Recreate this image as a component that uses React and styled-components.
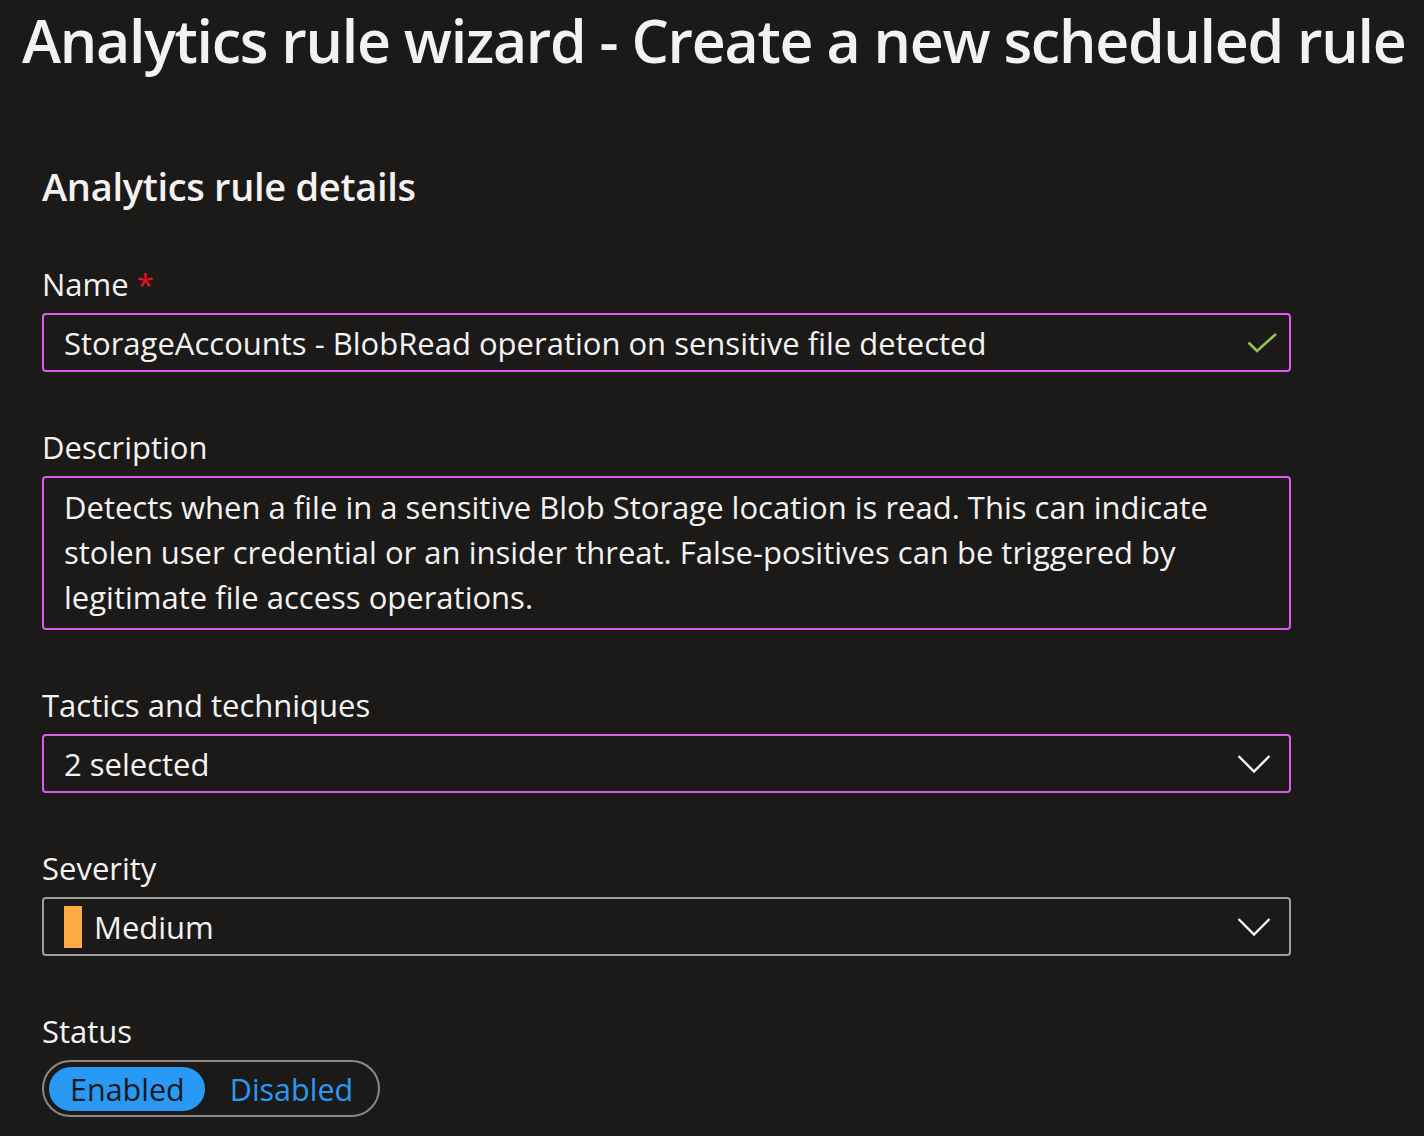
import React from "react";
import styled, { createGlobalStyle } from "styled-components";

const Global = createGlobalStyle`
  html, body { margin: 0; padding: 0; background: #1b1a19; }
  body { font-family: "Open Sans", "Noto Sans", sans-serif; color: #f3f2f1; }
  * { box-sizing: border-box; }
`;

const Page = styled.div`
  width: 1424px;
  height: 1136px;
  background: #1b1a19;
  overflow: hidden;
`;

const Title = styled.h1`
  margin: 0;
  padding: 0 0 0 22px;
  font-size: 59px;
  font-weight: 600;
  line-height: 80px;
  letter-spacing: -1.25px;
  white-space: nowrap;
`;

const Form = styled.div`
  width: 1291px;
  padding: 78px 0 0 42px;
  display: flex;
  flex-direction: column;
`;

const Heading = styled.h2`
  margin: 0 0 50px 0;
  font-size: 38px;
  font-weight: 600;
  line-height: 56px;
  letter-spacing: -0.3px;
`;

const Field = styled.div`
  display: flex;
  flex-direction: column;
  margin-bottom: 55px;
`;

const Label = styled.div`
  font-size: 31px;
  line-height: 40px;
  margin-bottom: 9px;
`;

const Required = styled.span`
  color: #e81123;
  margin-left: 8px;
`;

const Box = styled.div`
  display: flex;
  align-items: center;
  min-height: 59px;
  border: 2px solid ${(p) => (p.$muted ? "#a19f9d" : "#d75cf0")};
  border-radius: 4px;
  padding: ${(p) => (p.$multi ? "7px 20px 8px 20px" : "0 10px 0 20px")};
  font-size: 31px;
  line-height: ${(p) => (p.$multi ? "45px" : "40px")};
  gap: 12px;
`;

const Value = styled.div`
  flex: 1;
  max-width: ${(p) => (p.$wrap ? "1180px" : "none")};
`;

const SeverityBar = styled.span`
  width: 18px;
  height: 42px;
  background: #ffaa44;
  flex: none;
`;

const Toggle = styled.div`
  display: inline-flex;
  align-items: center;
  align-self: flex-start;
  gap: 4px;
  height: 57px;
  padding: 0 5px;
  border: 2px solid #8a8886;
  border-radius: 29px;
`;

const ToggleOption = styled.div`
  height: 44px;
  display: flex;
  align-items: center;
  padding: 0 20px 0 21px;
  border-radius: 22px;
  font-size: 30.5px;
  background: ${(p) => (p.$active ? "#2899f5" : "transparent")};
  color: ${(p) => (p.$active ? "#1b1a19" : "#2899f5")};
`;

const IconWrap = styled.span`
  display: flex;
  flex: none;
  margin-right: ${(p) => p.$mr || 0}px;
`;

const Check = () => (
  <IconWrap>
    <svg width="32" height="22" viewBox="0 0 32 22" fill="none">
      <path d="M1.5 10.5 L10 19 L29 2" stroke="#92c353" strokeWidth="2.6" />
    </svg>
  </IconWrap>
);

const Chevron = () => (
  <IconWrap $mr={8}>
    <svg width="34" height="20" viewBox="0 0 34 20" fill="none">
      <path d="M1.5 2 L17 17.5 L32.5 2" stroke="#f3f2f1" strokeWidth="2.4" />
    </svg>
  </IconWrap>
);

export default function App() {
  return (
    <Page>
      <Global />
      <Title>Analytics rule wizard - Create a new scheduled rule</Title>
      <Form>
        <Heading>Analytics rule details</Heading>
        <Field>
          <Label>
            Name<Required>*</Required>
          </Label>
          <Box>
            <Value>StorageAccounts - BlobRead operation on sensitive file detected</Value>
            <Check />
          </Box>
        </Field>
        <Field>
          <Label>Description</Label>
          <Box $multi>
            <Value $wrap>
              Detects when a file in a sensitive Blob Storage location is read. This can indicate
              stolen user credential or an insider threat. False-positives can be triggered by
              legitimate file access operations.
            </Value>
          </Box>
        </Field>
        <Field>
          <Label>Tactics and techniques</Label>
          <Box>
            <Value>2 selected</Value>
            <Chevron />
          </Box>
        </Field>
        <Field>
          <Label>Severity</Label>
          <Box $muted>
            <SeverityBar />
            <Value>Medium</Value>
            <Chevron />
          </Box>
        </Field>
        <Field>
          <Label>Status</Label>
          <Toggle>
            <ToggleOption $active>Enabled</ToggleOption>
            <ToggleOption>Disabled</ToggleOption>
          </Toggle>
        </Field>
      </Form>
    </Page>
  );
}
